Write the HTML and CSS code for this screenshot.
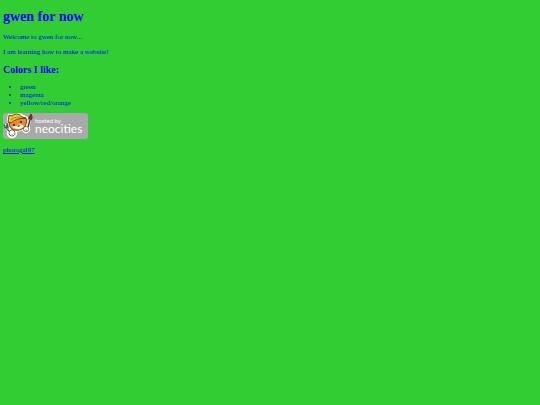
FILE: index.html
```html
<!DOCTYPE html>
<html lang="en">
<head>
    <meta charset="UTF-8">
    <meta name="viewport" content="width=device-width, initial-scale=1.0">
    <title>gwen for now</title>
    <link rel="stylesheet" href="styles.css">
</head>
<body>
    <h1>gwen for now</h1>

    <p>Welcome to gwen for now...</p>
    <p>I am learning how to make a website!</p>

    <h2>Colors I like:</h2>
    <ul class="colors">
        <li>green</li>
        <li>magenta</li>
        <li>yellow/red/orange</li>
    </ul>

    <a class="badge" href="#neocities" aria-label="hosted by neocities">
        <svg viewBox="0 0 85 26">
            <rect x="0" y="0" width="85" height="26" rx="3" fill="#a9a9a9"/>
            <!-- white sticker edge -->
            <g stroke="#fff" stroke-width="2.4" stroke-linejoin="round" stroke-linecap="round" fill="#fff">
                <path d="M5 8 L6 2 L10 3 C13 1 18 1 20 3 L24 5 L23 12 C21 17 15 18 10 17 Q6 15 5 8 Z"/>
                <path d="M2 12 L3 15 L7 20 M28 3 L25 14" fill="none"/>
                <circle cx="9" cy="20" r="4"/>
                <circle cx="23" cy="16" r="3"/>
            </g>
            <!-- cat head with cap -->
            <path d="M6 10 L6 7 L10 6 L20 5 L24 6 L23 11 C22 16 16 18 11 17 C8 16 6 14 6 10 Z" fill="#ec8a32" stroke="#3b2a12" stroke-width="0.8"/>
            <path d="M9 14 C11 12 13 14 15 12 C18 10 20 12 21 13 C19 17 13 17 9 14 Z" fill="#fff2d8"/>
            <path d="M5 9 L6 2 L9 3 C12 0 18 1 19 4 L23 5 C19 5 12 6 8 10 Z" fill="#eec02e" stroke="#4b3610" stroke-width="0.8"/>
            <path d="M8 7 C11 4 15 4 19 4" fill="none" stroke="#a87516" stroke-width="0.8"/>
            <ellipse cx="11" cy="12" rx="1" ry="1" fill="#221b12"/>
            <ellipse cx="18" cy="9" rx="1" ry="1" fill="#221b12"/>
            <path d="M14 13 L17 12 L16 14 Z" fill="#40200f"/>
            <!-- fork and left paw -->
            <path d="M1 11 L2 15 L5 14 L4 10 M3 12 L4 16 L8 20" fill="none" stroke="#45545c" stroke-width="1.2"/>
            <circle cx="9" cy="20" r="3" fill="#fff" stroke="#4a4032" stroke-width="0.7"/>
            <path d="M9 21 L10 24 M11 20 L12 22" stroke="#d69a55" stroke-width="1"/>
            <!-- brush and right paw -->
            <path d="M27 7 L25 14" stroke="#4d2b18" stroke-width="1.3"/>
            <path d="M26 6 C25 4 27 3 28 1 C30 4 29 6 28 7 Z" fill="#b42318" stroke="#2c1712" stroke-width="0.7"/>
            <circle cx="23" cy="16" r="2.6" fill="#fff" stroke="#4a4032" stroke-width="0.7"/>
            <path d="M22 16 L24 18" stroke="#d69a55" stroke-width="0.9"/>
            <text class="badge-small" x="32" y="10">hosted by</text>
            <text class="badge-name" x="32" y="20">neocities</text>
        </svg>
    </a>

    <a href="#photogal97">photogal97</a>
</body>
</html>
```

FILE: styles.css
```css
body {
    margin: 9px 3px;
    background: limegreen;
    color: blue;
    font-family: "Liberation Serif", "Times New Roman", serif;
    font-size: 7px;
    line-height: 8px;
}

h1 {
    margin: 0 0 8px;
    font-size: 14px;
    line-height: 16px;
}

h2 {
    margin: 8px 0 7px;
    font-size: 10px;
    line-height: 12px;
}

p {
    margin: 0 0 7px;
}

.colors {
    margin: 0 0 6px;
    padding-left: 17px;
}

a {
    color: #0000ee;
}

.badge {
    display: block;
    width: 85px;
    margin-bottom: 7px;
}

.badge svg {
    display: block;
    width: 100%;
}

.badge text {
    fill: white;
    font-family: "Liberation Sans Narrow", "Lato", sans-serif;
}

.badge-small {
    font-size: 6px;
}

.badge-name {
    font-size: 12px;
}
```
